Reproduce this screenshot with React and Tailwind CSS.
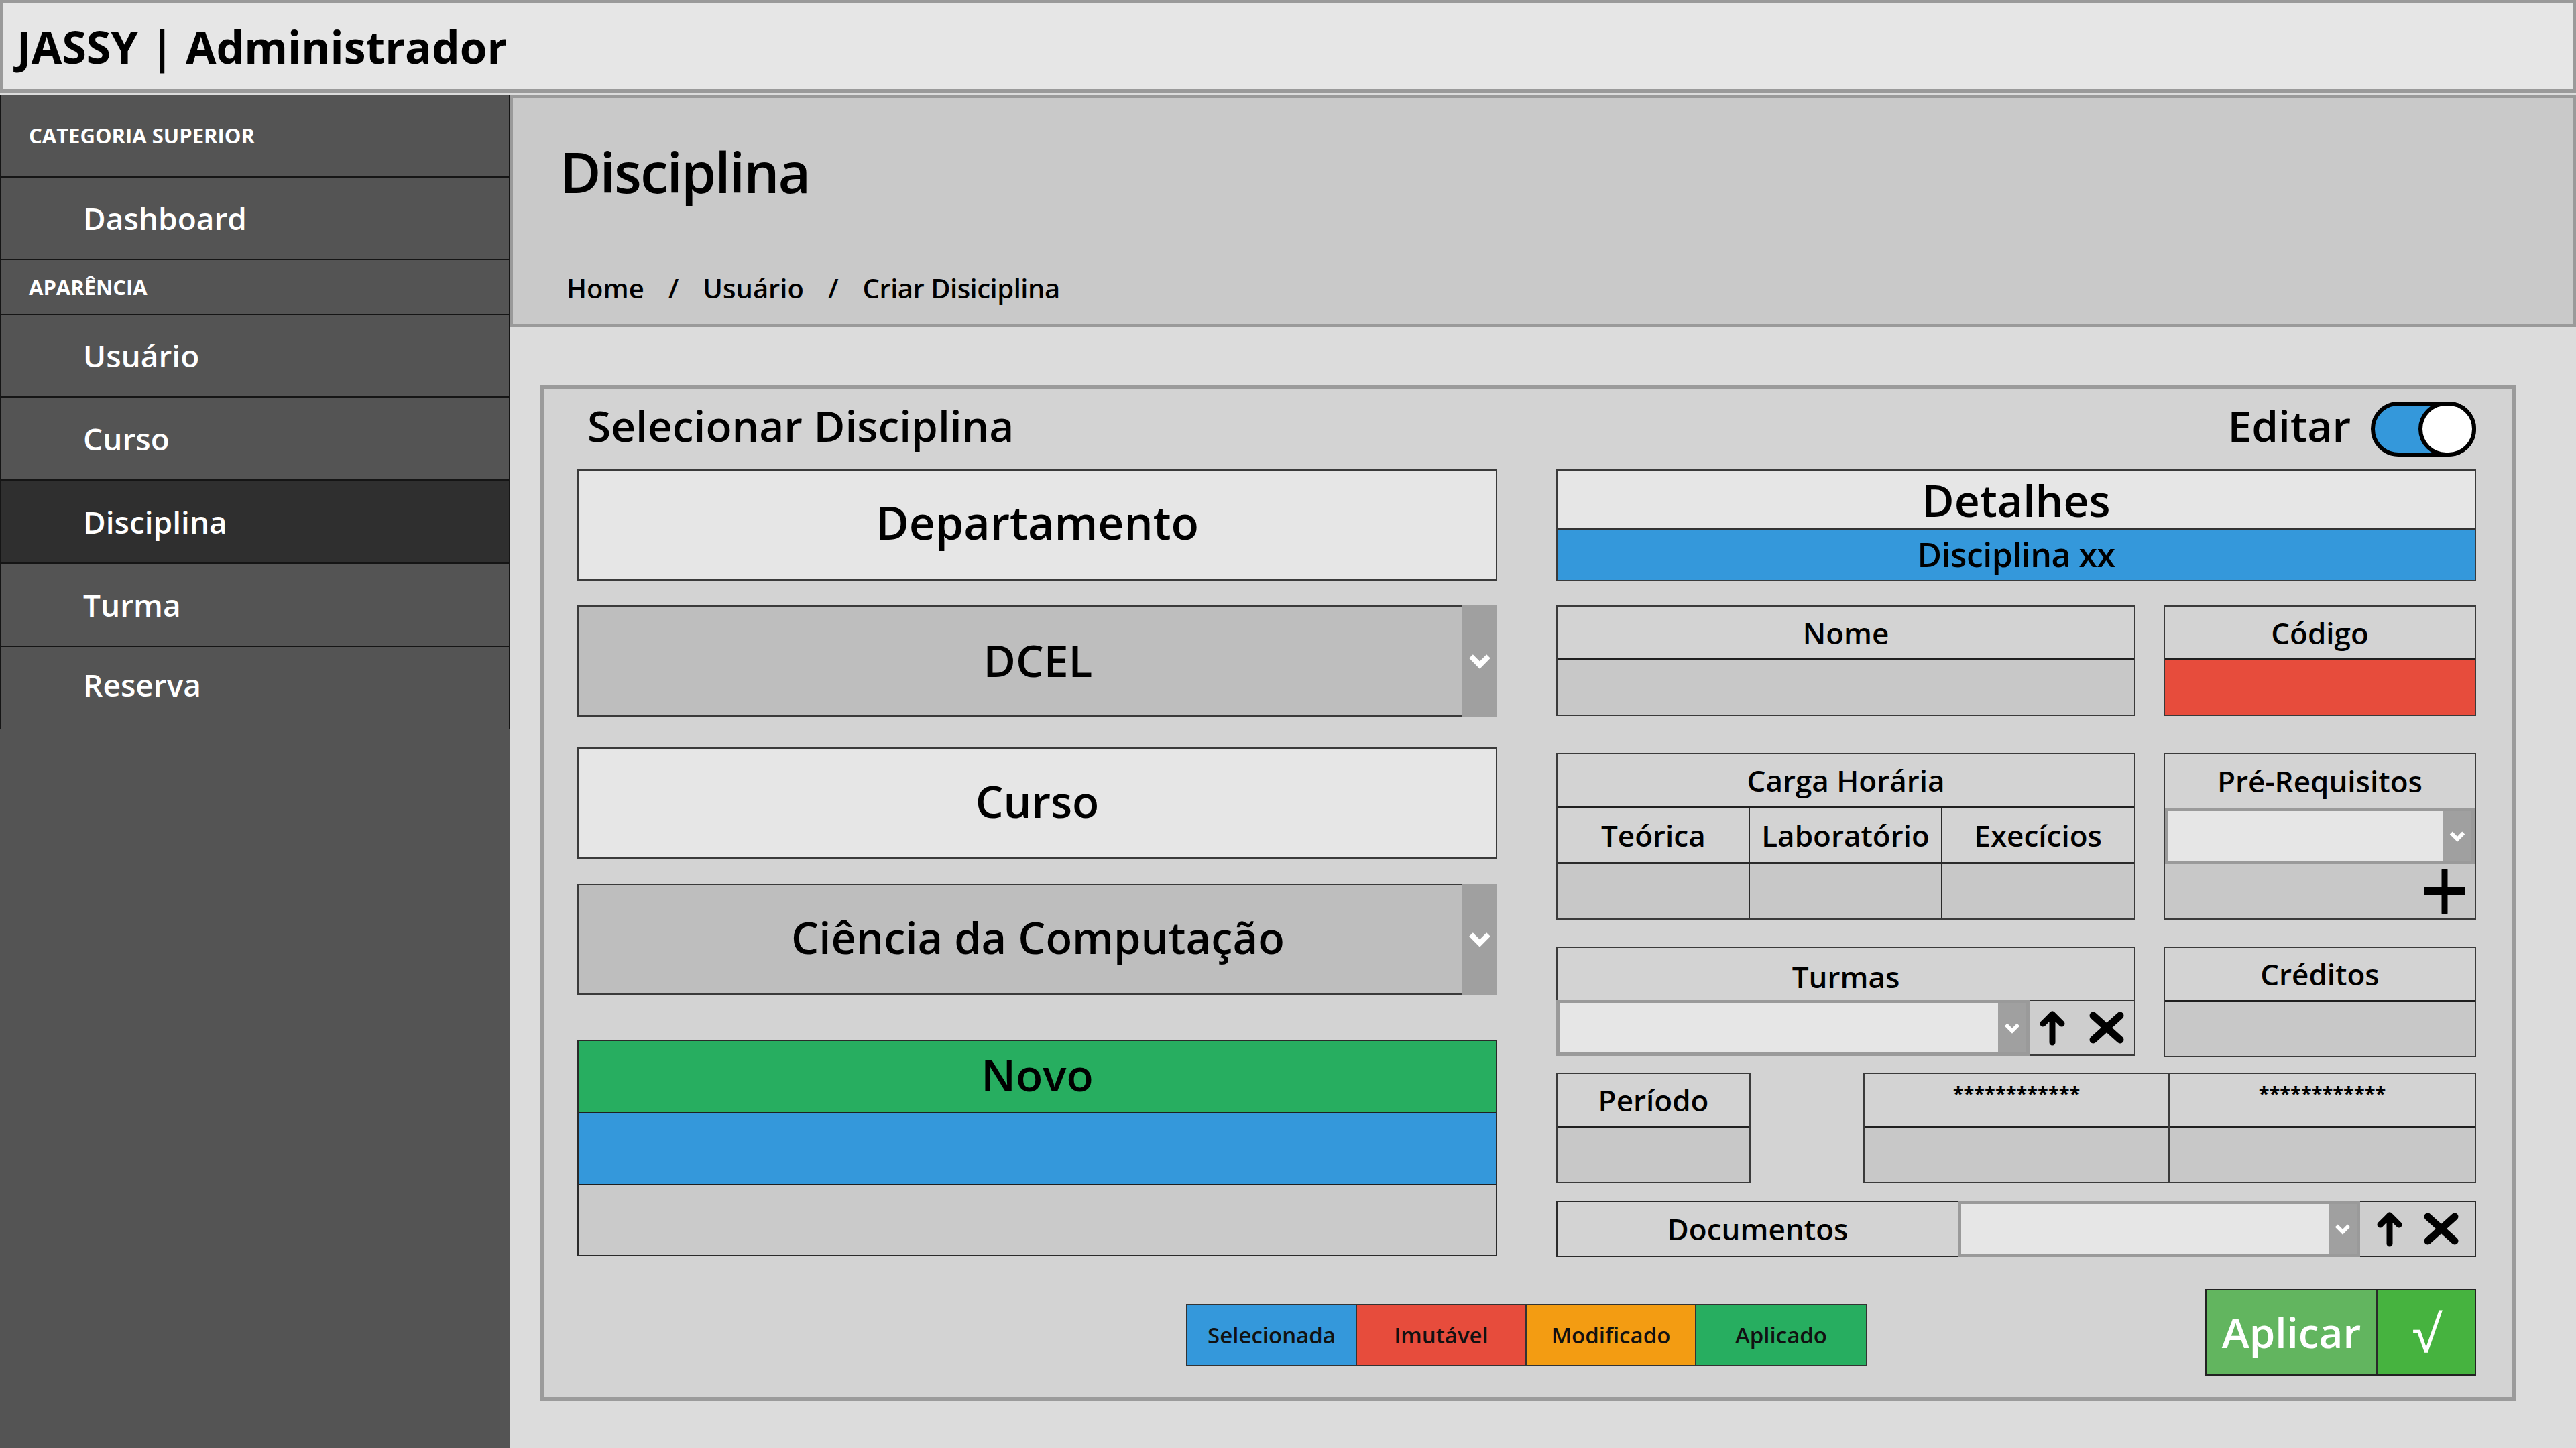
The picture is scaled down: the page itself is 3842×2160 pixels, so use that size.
import React from "react";

const Chevron = ({ small }) => (
  <svg width={small ? 26 : 36} height={small ? 17 : 24} viewBox="0 0 36 24">
    <path d="M5 5 L18 18 L31 5" fill="none" stroke="#fff" strokeWidth="8" />
  </svg>
);

const ArrowUp = () => (
  <svg width="40" height="54" viewBox="0 0 40 54">
    <path d="M20 49 V7 M6 21 L20 7 L34 21" fill="none" stroke="#000" strokeWidth="9" strokeLinecap="round" strokeLinejoin="round" />
  </svg>
);

const Cross = () => (
  <svg width="54" height="50" viewBox="0 0 54 50">
    <path d="M7 7 L47 43 M47 7 L7 43" fill="none" stroke="#000" strokeWidth="11" strokeLinecap="round" />
  </svg>
);

const Plus = () => (
  <svg width="66" height="68" viewBox="0 0 66 68">
    <path d="M33 2 V66" stroke="#000" strokeWidth="9" strokeLinecap="round" />
    <path d="M3 33 H63" stroke="#000" strokeWidth="12" />
  </svg>
);

const Category = ({ label, tall }) => (
  <div className={(tall ? "h-[123px]" : "h-[82px]") + " flex items-center pl-[42px] border border-[#151515] text-white text-[31px] font-bold"}>
    {label}
  </div>
);

const NavItem = ({ label, active, h = "h-[124px]", extra = "" }) => (
  <div className={(active ? "bg-[#2f2f2f] " : "bg-[#545454] ") + h + " flex items-center pl-[123px] border border-[#151515] text-white text-[46px] font-semibold " + extra}>
    {label}
  </div>
);

const BigBox = ({ label, className = "" }) => (
  <div className={"h-[166px] flex items-center justify-center pb-[8px] bg-[#e6e6e6] border-2 border-[#3a3a3a] font-semibold " + className}>
    {label}
  </div>
);

const BigSelect = ({ label, className = "" }) => (
  <div className={"h-[166px] flex " + className}>
    <div className="flex-1 flex items-center justify-center pl-[52px] pb-[4px] bg-[#bebebe] border-2 border-r-0 border-[#3a3a3a] font-semibold">
      {label}
    </div>
    <div className="w-[52px] bg-[#a0a0a0] flex items-center justify-center">
      <Chevron />
    </div>
  </div>
);

const SmallSelect = ({ className = "" }) => (
  <div className={"flex border-[5px] border-[#9a9a9a] " + className}>
    <div className="flex-1 bg-[#e6e6e6]" />
    <div className="w-[42px] bg-[#a0a0a0] flex items-center justify-center">
      <Chevron small />
    </div>
  </div>
);

const Field = ({ label, fill = "bg-[#c8c8c8]", className = "" }) => (
  <div className={"h-[165px] flex flex-col border-2 border-[#3a3a3a] " + className}>
    <div className="h-[80px] shrink-0 flex items-center justify-center bg-[#d3d3d3] border-b-[3px] border-[#1f1f1f] text-[44px] font-semibold">
      {label}
    </div>
    <div className={"flex-1 " + fill} />
  </div>
);

const Masked = ({ className = "" }) => (
  <div className={"flex flex-col " + className}>
    <div className="h-[80px] shrink-0 flex justify-center pt-[14px] bg-[#d3d3d3] border-b-[3px] border-[#1f1f1f] text-[29px] font-bold leading-none">
      ************
    </div>
    <div className="flex-1 bg-[#c8c8c8]" />
  </div>
);

const legend = [
  ["Selecionada", "bg-[#3498db]"],
  ["Imutável", "bg-[#e74c3c]"],
  ["Modificado", "bg-[#f39c12]"],
  ["Aplicado", "bg-[#27ae60]"],
];

export default function App() {
  return (
    <div className="min-h-screen w-full flex flex-col bg-[#dcdcdc] text-black font-['Open_Sans','Noto_Sans',sans-serif]">
      <header className="h-[138px] shrink-0 flex items-center pl-[20px] bg-[#e6e6e6] border-[5px] border-[#9a9a9a]">
        <h1 className="text-[66px] leading-none font-bold">JASSY | Administrador</h1>
      </header>

      <div className="flex flex-1 mt-[3px]">
        <aside className="w-[760px] shrink-0 bg-[#545454]">
          <Category label="CATEGORIA SUPERIOR" tall />
          <NavItem label="Dashboard" h="h-[123px]" />
          <Category label="APARÊNCIA" />
          <NavItem label="Usuário" h="h-[123px]" />
          <NavItem label="Curso" />
          <NavItem label="Disciplina" active />
          <NavItem label="Turma" />
          <NavItem label="Reserva" extra="pb-[10px]" />
        </aside>

        <main className="flex-1 flex flex-col">
          <section className="h-[347px] flex flex-col bg-[#c9c9c9] border-[5px] border-[#9a9a9a]">
            <h2 className="mt-[68px] ml-[70px] text-[84px] leading-none font-semibold tracking-[-2px]">Disciplina</h2>
            <nav className="mt-[112px] ml-[80px] flex gap-[36px] text-[40px] leading-none font-semibold">
              <span>Home</span>
              <span>/</span>
              <span>Usuário</span>
              <span>/</span>
              <span className="tracking-[-0.5px]">Criar Disiciplina</span>
            </nav>
          </section>

          <section className="mt-[86px] ml-[46px] w-[2947px] h-[1516px] flex flex-col bg-[#d3d3d3] border-[6px] border-[#9b9b9b] pt-[19px] pl-[49px] pr-[54px] pb-[34px]">
            <div className="h-[82px] flex items-center justify-between">
              <h3 className="pl-[15px] pb-[10px] text-[64px] leading-none font-semibold">Selecionar Disciplina</h3>
              <div className="flex items-center gap-[30px]">
                <span className="pb-[10px] text-[64px] leading-none font-semibold">Editar</span>
                <div className="w-[157px] h-[82px] flex justify-end rounded-full border-[6px] border-black bg-[#3498db]">
                  <div className="w-[86px] h-[82px] -my-[6px] -mr-[6px] rounded-full border-[6px] border-black bg-white" />
                </div>
              </div>
            </div>

            <div className="mt-[19px] grid grid-cols-2 gap-x-[88px]">
              <div className="flex flex-col">
                <BigBox label="Departamento" className="text-[68px]" />
                <BigSelect label="DCEL" className="mt-[37px] text-[66px]" />
                <BigBox label="Curso" className="mt-[46px] text-[66px]" />
                <BigSelect label="Ciência da Computação" className="mt-[37px] text-[65px]" />
                <div className="mt-[67px] h-[323px] flex flex-col border-2 border-[#2a2a2a]">
                  <div className="h-[108px] flex items-center justify-center pb-[8px] bg-[#27ae60] border-b-2 border-[#1f1f1f] text-[66px] font-semibold">
                    Novo
                  </div>
                  <div className="h-[107px] bg-[#3498db] border-b-2 border-[#1f1f1f]" />
                  <div className="flex-1 bg-[#cacaca]" />
                </div>
              </div>

              <div className="flex flex-col">
                <div className="h-[166px] flex flex-col border-2 border-[#3a3a3a]">
                  <div className="h-[88px] flex items-center justify-center bg-[#e6e6e6] border-b-2 border-[#333] text-[66px] font-semibold">
                    Detalhes
                  </div>
                  <div className="flex-1 flex items-center justify-center bg-[#3498db] text-[50px] font-semibold tracking-[-0.5px]">
                    Disciplina xx
                  </div>
                </div>

                <div className="mt-[37px] flex gap-[42px]">
                  <Field label="Nome" className="flex-1" />
                  <Field label="Código" fill="bg-[#e74c3c]" className="w-[466px]" />
                </div>

                <div className="mt-[55px] flex gap-[42px]">
                  <div className="flex-1 h-[249px] flex flex-col border-2 border-[#3a3a3a]">
                    <div className="h-[80px] shrink-0 flex items-center justify-center bg-[#d3d3d3] border-b-[3px] border-[#1f1f1f] text-[44px] font-semibold">
                      Carga Horária
                    </div>
                    <div className="h-[84px] shrink-0 grid grid-cols-3 bg-[#d3d3d3] border-b-[3px] border-[#2a2a2a] text-[44px] font-semibold">
                      <div className="flex items-center justify-center border-r border-[#2a2a2a]">Teórica</div>
                      <div className="flex items-center justify-center border-r border-[#2a2a2a]">Laboratório</div>
                      <div className="flex items-center justify-center">Execícios</div>
                    </div>
                    <div className="flex-1 grid grid-cols-3 bg-[#c8c8c8]">
                      <div className="border-r border-[#2a2a2a]" />
                      <div className="border-r border-[#2a2a2a]" />
                      <div />
                    </div>
                  </div>
                  <div className="w-[466px] h-[249px] flex flex-col border-2 border-[#3a3a3a]">
                    <div className="h-[80px] shrink-0 flex items-center justify-center bg-[#d3d3d3] text-[44px] font-semibold">
                      Pré-Requisitos
                    </div>
                    <SmallSelect className="h-[84px] shrink-0" />
                    <div className="flex-1 flex items-center justify-end pr-[12px] bg-[#c8c8c8]">
                      <Plus />
                    </div>
                  </div>
                </div>

                <div className="mt-[40px] flex gap-[42px]">
                  <div className="flex-1 h-[163px] flex flex-col border-2 border-[#3a3a3a]">
                    <div className="h-[77px] shrink-0 flex items-center justify-center pt-[8px] bg-[#d3d3d3] text-[44px] font-semibold">
                      Turmas
                    </div>
                    <div className="flex-1 flex">
                      <SmallSelect className="w-[706px] -ml-[2px] -mb-[2px]" />
                      <div className="flex-1 flex items-center justify-center gap-[34px] bg-[#cecece] border-t-2 border-[#333]">
                        <ArrowUp />
                        <Cross />
                      </div>
                    </div>
                  </div>
                  <Field label="Créditos" className="w-[466px]" />
                </div>

                <div className="mt-[23px] flex">
                  <Field label="Período" className="w-[290px]" />
                  <div className="ml-[168px] flex-1 h-[165px] grid grid-cols-2 border-2 border-[#3a3a3a]">
                    <Masked className="border-r-2 border-[#3a3a3a]" />
                    <Masked />
                  </div>
                </div>

                <div className="mt-[26px] h-[84px] flex border-2 border-[#2a2a2a]">
                  <div className="w-[597px] flex items-center justify-center bg-[#d3d3d3] text-[44px] font-semibold">
                    Documentos
                  </div>
                  <SmallSelect className="w-[600px] -my-[2px]" />
                  <div className="flex-1 flex items-center justify-center gap-[30px] bg-[#cecece]">
                    <ArrowUp />
                    <Cross />
                  </div>
                </div>
              </div>
            </div>

            <div className="mt-[48px] grid grid-cols-[1fr_auto_1fr] items-center">
              <div />
              <div className="mt-[8px] h-[93px] flex border-2 border-[#333]">
                {legend.map(([label, bg], i) => (
                  <div
                    key={label}
                    className={bg + (i < 3 ? " border-r-2 border-[#333]" : "") + " w-[253px] flex items-center justify-center text-[33px] font-semibold text-[#111]"}
                  >
                    {label}
                  </div>
                ))}
              </div>
              <div className="justify-self-end h-[129px] w-[404px] flex border-2 border-[#222]">
                <div className="w-[255px] flex items-center justify-center bg-[#62b55f] border-r-2 border-[#2a2a2a] text-white text-[62px] font-semibold">
                  Aplicar
                </div>
                <div className="flex-1 flex items-center justify-center bg-[#46b33f] text-white text-[76px] leading-none">
                  √
                </div>
              </div>
            </div>
          </section>
        </main>
      </div>
    </div>
  );
}
